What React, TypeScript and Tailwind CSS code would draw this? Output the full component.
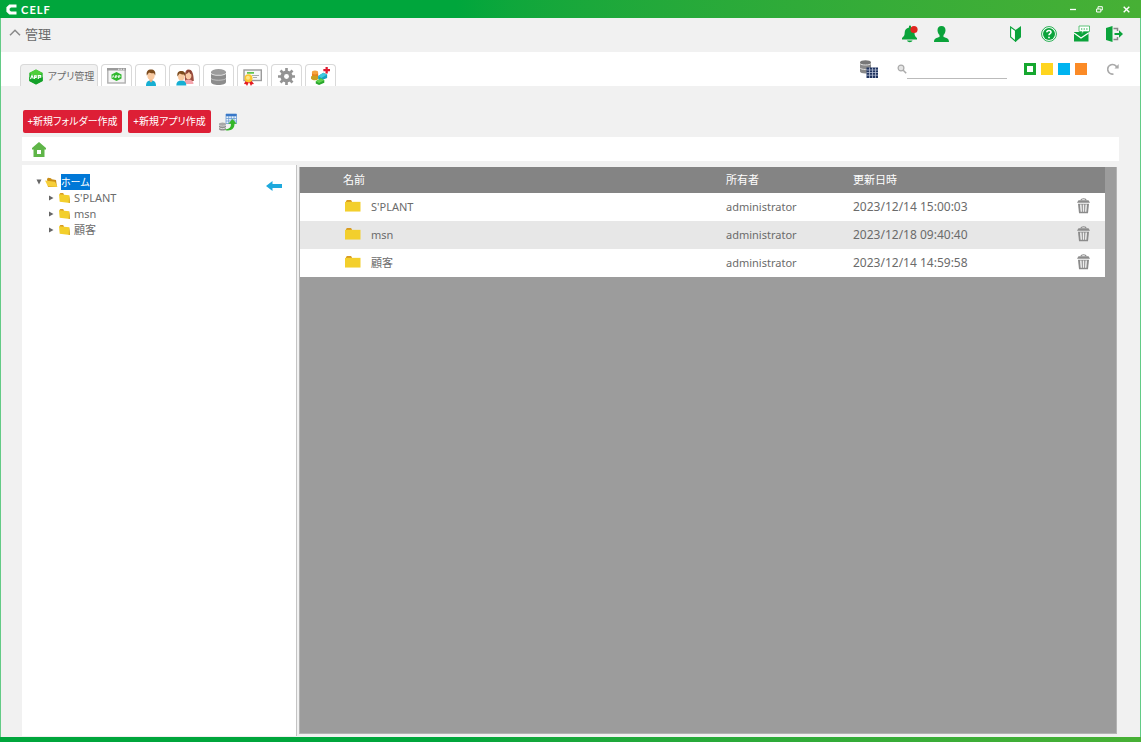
import type { ReactNode } from 'react';

const entries = [
  { name: "S'PLANT", owner: 'administrator', updated: '2023/12/14 15:00:03' },
  { name: 'msn', owner: 'administrator', updated: '2023/12/18 09:40:40' },
  { name: '顧客', owner: 'administrator', updated: '2023/12/14 14:59:58' },
];

const swatches = [
  { label: '緑', className: 'border-[3px] border-[#16a72f] bg-white' },
  { label: '黄', className: 'bg-[#ffd51f]' },
  { label: '青', className: 'bg-[#00b4f0]' },
  { label: '橙', className: 'bg-[#fb8a26]' },
];

function AppHex({ size }: { size: number }) {
  return (
    <svg width={size} height={size} viewBox="0 0 16 16">
      <path d="M8 .5 14.7 4v8L8 15.5 1.3 12V4z" fill="#27b52d" />
      <path d="M8 .5 14.7 4 8 8 1.3 4z" fill="#4fce3a" />
      <path d="M8 15.5 1.3 12V8L8 11l6.700-3v4z" fill="#14a02a" />
      <path d="M2.500 10 4 6.500 5.300 9.600M6.400 10V6.800h1.800v1.600H6.400M10.300 10V6.500h2.400v1.600h-2.400" fill="none" stroke="#fff" strokeWidth="1.100" />
    </svg>
  );
}

function AppWindowIcon() {
  return (
    <svg width="19" height="16" viewBox="0 0 19 16">
      <rect x=".8" y="1" width="17.400" height="14" fill="#f4f4f4" stroke="#b0b0b0" strokeWidth="1.400" />
      <path d="M0 0h19v2.500H0z" fill="#9a9a9a" />
      <path d="M11 .8h1.500v1H11zM13.500.8H15v1h-1.500zM16 .8h1.500v1H16z" fill="#eee" />
      <path d="m9.500 4 5 2.500v4l-5 2.500-5-2.500v-4z" fill="#31b82f" />
      <path d="m5.300 9.700 1-2.200 1 2.200M8.500 10V7.700h1.500V9H8.500M11.500 10V7.700H13V9h-1.500" fill="none" stroke="#fff" strokeWidth=".8" />
    </svg>
  );
}

function UserIcon() {
  return (
    <svg width="12" height="17" viewBox="0 0 12 17">
      <path d="M1 17c0-4 1.500-5.500 5-5.500s5 1.500 5 5.500z" fill="#16afd3" />
      <path d="M4.500 9h3v3L6 13.500 4.500 12z" fill="#eeb083" />
      <ellipse cx="6" cy="6.500" rx="3.700" ry="4.200" fill="#f8c9a0" />
      <path d="M1.800 6.500C1 2.200 3 .5 6 .5s5 1.700 4.200 6L9 4.200C7 4.500 5 4 4 3.500z" fill="#7c4b1d" />
    </svg>
  );
}

function UsersIcon() {
  return (
    <svg width="18" height="17" viewBox="0 0 18 17">
      <path d="M9 12C8.500 5 9 .5 12.700.5S17.500 5 17.800 12z" fill="#9c4f3f" />
      <path d="M7.500 15c0-3 2-4.500 5-4.500s5 1.500 5 4.500z" fill="#f5a5ae" />
      <ellipse cx="12.500" cy="6.500" rx="2.900" ry="3.800" fill="#fbcba6" />
      <path d="M9.500 5c1.500 0 3-1 3.500-2.500.5 1.500 1.300 2.500 2.500 3L15 1.800l-3.500-1z" fill="#8b4334" />
      <path d="M.3 16.500c0-3.500 1.700-5 5-5s5 1.500 5 5z" fill="#16afd3" />
      <ellipse cx="5.300" cy="7.500" rx="3.300" ry="4" fill="#f8c9a0" />
      <path d="M1.500 7.500c-.7-4 1-5.500 3.800-5.500s4.500 1.500 3.800 5.500L8 5.500c-2 0-3.500-.5-4.500-1z" fill="#7c4b1d" />
    </svg>
  );
}

function DatabaseIcon() {
  return (
    <svg width="15" height="16" viewBox="0 0 15 16">
      <path d="M0 3v10c0 1.700 3.300 3 7.500 3s7.500-1.300 7.500-3V3z" fill="#8c8c8c" />
      <ellipse cx="7.500" cy="3" rx="7.500" ry="3" fill="#9c9c9c" />
      <path d="M0 4.200c1.500 2.800 13.500 2.800 15 0" fill="none" stroke="#e0e0e0" strokeWidth="1.100" />
      <path d="M0 9.500c1.500 2.300 13.500 2.300 15 0" fill="none" stroke="#d0d0d0" strokeWidth=".8" />
    </svg>
  );
}

function CertificateIcon() {
  return (
    <svg width="19" height="17" viewBox="0 0 19 17">
      <rect x="1" y="1" width="17.300" height="10.500" fill="#f7f7f7" stroke="#9b9b9b" strokeWidth="1.400" />
      <path d="M4 3h7v1.700H4z" fill="#62c44c" />
      <path d="M9 6h7v1H9zM10 8h4v1h-4z" fill="#aaa" />
      <path d="m3 11-2 4 2 .2L4 17l2-4 2 4 1-1.800 2-.2-3-4z" fill="#e41b23" />
      <circle cx="5.500" cy="9.300" r="4" fill="#fcc62d" />
      <circle cx="5" cy="8.800" r="2" fill="#ffe588" />
    </svg>
  );
}

function GearIcon() {
  return (
    <svg width="17" height="17" viewBox="0 0 18 18">
      <g fill="#949494">
        <path d="M7.600 0h2.800v18H7.600z" />
        <path d="M7.600 0h2.800v18H7.600z" transform="rotate(45 9 9)" />
        <path d="M7.600 0h2.800v18H7.600z" transform="rotate(90 9 9)" />
        <path d="M7.600 0h2.800v18H7.600z" transform="rotate(135 9 9)" />
        <circle cx="9" cy="9" r="6.400" />
      </g>
      <circle cx="9" cy="9" r="2.600" fill="#fff" />
    </svg>
  );
}

function BlocksIcon() {
  return (
    <svg width="19" height="18" viewBox="0 0 20 19">
      <path d="M1 6v6c1.500 1.500 5 1.500 6.500 0V6z" fill="#ee7d18" />
      <ellipse cx="4.200" cy="5.800" rx="3.300" ry="2" fill="#f5a33e" />
      <path d="M0 10c2-1.500 5.500-1.500 7.500.5v2.500c-2 1.500-5.500 1.500-7.500-.5z" fill="#c8a021" />
      <path d="m7.500 9.500 5.500-3.500 4 2v3.500L11 14l-3.500-1.500z" fill="#189fc0" />
      <path d="m7.500 9.500 5.500-3.500 4 2-6 3.500z" fill="#3fc8dd" />
      <path d="m5 15 5.500-3 3.500 2v2.500L8.500 19 5 17.500z" fill="#29a72c" />
      <path d="m5 15 5.500-3 3.500 2-5.500 3z" fill="#5ed04c" />
      <path d="M15.300 0h2.400v2.100H20v2.400h-2.300v2.300h-2.400V4.500H13V2.100h2.300z" fill="#e01b30" />
    </svg>
  );
}

function DatabaseTableIcon() {
  return (
    <svg width="18" height="18" viewBox="0 0 18 18">
      <path d="M0 2.500v9c0 1.200 2.500 2 5.500 2s5.500-.8 5.500-2v-9z" fill="#8a8a8a" />
      <ellipse cx="5.500" cy="2.500" rx="5.500" ry="2.300" fill="#777" />
      <path d="M0 3.500c1 2 10 2 11 0M0 8c1 2 10 2 11 0" fill="none" stroke="#ddd" />
      <path d="M6.500 7.500H18V18H6.500z" fill="#1f335f" />
      <path d="M6.500 10H18M6.500 12.500H18M6.500 15.200H18M9.500 7.500V18M12.500 7.500V18M15.500 7.500V18" stroke="#c3cce0" strokeWidth=".7" />
    </svg>
  );
}

function ImportIcon() {
  return (
    <svg width="18" height="18" viewBox="0 0 18 18">
      <path d="M7 1h10.500v9.500H7z" fill="#e9f3fc" stroke="#6a9bd0" strokeWidth=".8" />
      <path d="M7 1h10.500v2.300H7z" fill="#3978c8" />
      <path d="M7 5.500h10.500M7 8h10.500M9.700 3v7.500M12.300 3v7.500M15 3v7.500" stroke="#6a9bd0" strokeWidth=".8" />
      <path d="M0 11v5c0 2 7 2 7 0v-5z" fill="#8e8e8e" />
      <ellipse cx="3.500" cy="11" rx="3.500" ry="1.500" fill="#a8a8a8" />
      <path d="M0 12c1 1.500 6 1.500 7 0M0 14.500c1 1.500 6 1.500 7 0" fill="none" stroke="#eee" strokeWidth=".8" />
      <path d="M6.500 16.200c3.500.3 5.500-1.500 5.500-5.400H9.300L13.500 6l4.200 4.800h-2.200c0 5.200-3.500 7.400-9 6.400z" fill="#35b72a" />
    </svg>
  );
}

function FolderIcon({ small }: { small?: boolean }) {
  return (
    <svg width={small ? 11 : 16} height={small ? 10 : 12} viewBox="0 0 16 13" preserveAspectRatio="none">
      <path d="M1 2V1l1-1h4l1 1.500V3H1z" fill="#d89b22" />
      <path d={small ? 'M0 1.500 15 3l1 10L1 11.500z' : 'M0 2h15.500v10.500H0z'} fill="#f3cf2c" />
      {small && <path d="m15 3 1 10-2-.3z" fill="#d9aa24" />}
    </svg>
  );
}

function OpenFolderIcon() {
  return (
    <svg width="13" height="11" viewBox="0 0 13 11">
      <path d="M2 2 3 .7l3 .5.7 1L11 3l1 7H3z" fill="#c98e16" />
      <path d="m0 3.500 10 1.200L12.500 10 3 9.500z" fill="#f7cf39" />
    </svg>
  );
}

function TrashIcon() {
  return (
    <svg width="13" height="16" viewBox="0 0 13 17" preserveAspectRatio="none">
      <path d="M4 2.500c0-2.300 5-2.300 5 0" fill="none" stroke="#8b8b8b" strokeWidth="1.200" />
      <path d="M1.500 2.500h10L13 5H0z" fill="#8b8b8b" />
      <path d="M1 6h11l-1 10.300H2z" fill="#8b8b8b" />
      <path d="M3 7h1.600l.4 7.500H3.600zM5.800 7h1.400v7.500H5.800zM8.400 7H10l-.6 7.500H8z" fill="#efefef" />
    </svg>
  );
}

function BellIcon() {
  return (
    <svg width="16" height="18" viewBox="0 0 16 18">
      <path d="M7 1.500C7 .3 9 .3 9 1.500v1c2.500.7 3.500 2.500 3.500 5 0 3 .5 4 2.500 5.500v1.500H0V13c2-1.500 2.700-3 2.700-5.500s1.600-4.500 4.300-5z" fill="#0ba33b" />
      <path d="M5 15.500h5.500c-.7 2.200-4.800 2.200-5.500 0z" fill="#0ba33b" />
      <circle cx="12" cy="4.500" r="3.600" fill="#e0251f" />
    </svg>
  );
}

function PersonIcon() {
  return (
    <svg width="15" height="16" viewBox="0 0 15 16">
      <path d="M7.500 0c2.700 0 4.200 2 4 4.500-.2 2-1 3.500-2 4.500v2c3 .9 5.500 1.500 5.500 5H0c0-3.500 2.500-4.100 5.500-5V9c-1-1-1.800-2.500-2-4.500C3.300 2 4.800 0 7.500 0z" fill="#0ba33b" />
    </svg>
  );
}

function BeginnerIcon() {
  return (
    <svg width="11" height="16" viewBox="0 0 11 16">
      <path d="M.6 1 5.500 4.500v10.700L.6 11z" fill="#fff" stroke="#0ba33b" strokeWidth="1.100" />
      <path d="M11 0v11.300L5.500 16V4z" fill="#0ba33b" />
    </svg>
  );
}

function HelpIcon() {
  return (
    <svg width="16" height="16" viewBox="0 0 16 16">
      <circle cx="8" cy="8" r="7.400" fill="#fff" stroke="#0ba33b" strokeWidth=".9" />
      <circle cx="8" cy="8" r="6" fill="#0ba33b" />
      <path d="M5.800 6.300C6 3.800 10.200 4 10 6.300 9.900 7.800 8 7.700 8 9.300M8 10.700v1.500" fill="none" stroke="#fff" strokeWidth="1.600" />
    </svg>
  );
}

function MailIcon() {
  return (
    <svg width="16" height="17" viewBox="0 0 16 17">
      <path d="M0 7h14.500v9.500H0z" fill="#0ba33b" />
      <path d="m0 8 7 5 7.500-5" fill="none" stroke="#fff" strokeWidth="1.300" />
      <path d="M5 1h10.500v5.500h-6L8 8.500v-2H5z" fill="#fff" stroke="#4dbd6c" strokeWidth=".9" />
      <path d="M7 3.400h1.300v1.200H7zM9.600 3.400h1.300v1.200H9.600zM12.200 3.400h1.300v1.200h-1.300z" fill="#0ba33b" />
    </svg>
  );
}

function LogoutIcon() {
  return (
    <svg width="17" height="16" viewBox="0 0 17 16">
      <path d="M0 2 6.500 0v16L0 14z" fill="#0ba33b" />
      <path d="M7.500 2.500h4V5M11.500 11v2.500h-4" fill="none" stroke="#888" strokeWidth="1.500" />
      <path d="M8.500 7H13V4.300L17 8l-4 3.700V9H8.500z" fill="#0ba33b" />
    </svg>
  );
}

function IconButton({ label, className = '', children }: { label: string; className?: string; children: ReactNode }) {
  return (
    <button type="button" aria-label={label} className={`flex shrink-0 items-center justify-center ${className}`}>
      {children}
    </button>
  );
}

function TitleBar() {
  return (
    <div className="flex h-[18px] shrink-0 items-center bg-linear-to-r from-[#00a63c] from-40% to-[#47b035] pr-0.5 pl-1.5">
      <svg width="11" height="11" viewBox="0 0 11 11" aria-hidden="true">
        <path d="M10.500 2H4L2 4v3l2 2h6.500" fill="none" stroke="#fff" strokeWidth="3.200" />
      </svg>
      <span className="ml-1 font-['Lato',sans-serif] text-[11px] leading-none font-bold tracking-widest text-white">CELF</span>
      <div className="ml-auto flex">
        <IconButton label="最小化" className="h-4 w-[26px]">
          <svg width="7" height="7" viewBox="0 0 7 7"><path d="M0 3.500h6" stroke="#fff" strokeWidth="1.300" /></svg>
        </IconButton>
        <IconButton label="元に戻す" className="h-4 w-[27px]">
          <svg width="7" height="7" viewBox="0 0 7 7"><path d="M2 3V.7h4.300V4H5M.6 3h4.200v3H.6z" fill="none" stroke="#fff" /></svg>
        </IconButton>
        <IconButton label="閉じる" className="h-4 w-[26px]">
          <svg width="7" height="7" viewBox="0 0 7 7"><path d="m.7.700 5.600 5.600M6.300.7.700 6.300" stroke="#fff" strokeWidth="1.400" /></svg>
        </IconButton>
      </div>
    </div>
  );
}

function PageHeader() {
  return (
    <header className="flex h-[34px] shrink-0 items-center bg-[#f1f1f1] pr-[17px] pb-[3px] pl-2">
      <svg width="12" height="7" viewBox="0 0 12 7" className="mb-0.5" aria-hidden="true">
        <path d="m1 6.300 5-5 5 5" fill="none" stroke="#8a8a8a" strokeWidth="1.500" />
      </svg>
      <h1 className="ml-1 text-[13px] leading-4">管理</h1>
      <div className="ml-auto flex items-center">
        <IconButton label="通知"><BellIcon /></IconButton>
        <IconButton label="ユーザー" className="ml-4"><PersonIcon /></IconButton>
        <IconButton label="初心者ガイド" className="ml-[61px]"><BeginnerIcon /></IconButton>
        <IconButton label="ヘルプ" className="ml-5"><HelpIcon /></IconButton>
        <IconButton label="お問い合わせ" className="ml-[17px]"><MailIcon /></IconButton>
        <IconButton label="ログアウト" className="ml-4"><LogoutIcon /></IconButton>
      </div>
    </header>
  );
}

function Tab({ label, children }: { label: string; children: ReactNode }) {
  return (
    <button
      type="button"
      role="tab"
      aria-selected="false"
      aria-label={label}
      className="flex h-[22px] w-[31px] items-end justify-center overflow-hidden rounded-t border border-b-0 border-[#d9d9d9] bg-white"
    >
      {children}
    </button>
  );
}

function TabBar() {
  return (
    <div className="flex h-[34px] shrink-0 items-end bg-white pr-[21px] pl-[19px]">
      <div role="tablist" className="flex items-end gap-[3px]">
        <button
          type="button"
          role="tab"
          aria-selected="true"
          className="flex h-[22px] w-[78px] items-center justify-center gap-1 rounded-t border border-b-0 border-[#d9d9d9] bg-[#f1f1f1] pt-0.5 pl-1 text-[10px] whitespace-nowrap"
        >
          <AppHex size={16} />
          アプリ管理
        </button>
        <Tab label="アプリ画面"><span className="mb-0.5"><AppWindowIcon /></span></Tab>
        <Tab label="ユーザー管理"><UserIcon /></Tab>
        <Tab label="グループ管理"><UsersIcon /></Tab>
        <Tab label="データベース"><span className="mb-px"><DatabaseIcon /></span></Tab>
        <Tab label="ライセンス"><CertificateIcon /></Tab>
        <Tab label="設定"><span className="mb-px"><GearIcon /></span></Tab>
        <Tab label="アドオン"><span className="mb-px"><BlocksIcon /></span></Tab>
      </div>
      <div className="ml-auto flex items-center self-center">
        <IconButton label="テーブル一覧"><DatabaseTableIcon /></IconButton>
        <label className="ml-[19px] flex items-center">
          <svg width="10" height="10" viewBox="0 0 10 10" aria-hidden="true">
            <circle cx="4" cy="4" r="2.900" fill="#e4e4e4" stroke="#aaa" strokeWidth="1.200" />
            <path d="m6.200 6.200 3 3" stroke="#aaa" strokeWidth="1.500" />
          </svg>
          <input
            type="search"
            aria-label="検索"
            className="h-5 w-[100px] border-b border-[#bbb] bg-transparent text-[11px] outline-none"
          />
        </label>
        <div className="ml-[17px] flex gap-[5px]">
          {swatches.map((s) => (
            <button key={s.label} type="button" aria-label={s.label} className={`size-[12px] ${s.className}`} />
          ))}
        </div>
        <IconButton label="更新" className="ml-5">
          <svg width="12" height="12" viewBox="0 0 12 12">
            <path d="M6.500 11A4.800 4.800 0 1 1 10 4.500" fill="none" stroke="#aaa" strokeWidth="1.700" />
            <path d="M11.700 1v4.500H7.500z" fill="#aaa" />
          </svg>
        </IconButton>
      </div>
    </div>
  );
}

function FolderTree() {
  return (
    <nav className="flex w-[275px] shrink-0 items-start border-r border-[#c4c4c4] bg-white pt-[9px] pr-[14px] pl-[14px]">
      <ul className="leading-4">
        <li>
          <div className="flex h-4 items-center">
            <svg width="6" height="6" viewBox="0 0 6 6" aria-hidden="true"><path d="M.5.500h5L3 5.500z" fill="#666" /></svg>
            <span className="ml-[3px]"><OpenFolderIcon /></span>
            <a href="#" className="ml-[3px] bg-[#0078d7] text-[10px] text-white">ホーム</a>
          </div>
          <ul className="pl-[13px]">
            {entries.map((e) => (
              <li key={e.name} className="flex h-4 items-center">
                <svg width="5" height="6" viewBox="0 0 5 6" aria-hidden="true"><path d="M0 .5v5L4.500 3z" fill="#666" /></svg>
                <span className="ml-[5px]"><FolderIcon small /></span>
                <a href="#" className="ml-1">{e.name}</a>
              </li>
            ))}
          </ul>
        </li>
      </ul>
      <IconButton label="ツリーを閉じる" className="mt-[7px] ml-auto">
        <svg width="16" height="10" viewBox="0 0 16 10">
          <path d="M0 5 6.500 0v3H16v4H6.500v3z" fill="#1ea9dd" />
        </svg>
      </IconButton>
    </nav>
  );
}

function FileTable() {
  return (
    <div className="my-0.5 mr-0.5 ml-0.5 min-w-0 grow border border-t-0 border-[#b3b3b3] bg-[#9c9c9c] pr-[11px]">
      <table className="w-full table-fixed border-collapse text-left">
        <thead>
          <tr className="h-[26px] bg-[#848484] text-white">
            <th className="w-[426px] pl-[43px] font-normal">名前</th>
            <th className="w-[127px] font-normal">所有者</th>
            <th className="font-normal">更新日時</th>
            <th className="w-[42px]" aria-label="操作" />
          </tr>
        </thead>
        <tbody>
          {entries.map((e) => (
            <tr key={e.name} className="h-7 bg-white even:bg-[#e7e7e7]">
              <td className="pl-[45px]">
                <a href="#" className="flex items-center gap-2.5">
                  <span className="pb-0.5"><FolderIcon /></span>
                  {e.name}
                </a>
              </td>
              <td>{e.owner}</td>
              <td className="text-xs">{e.updated}</td>
              <td>
                <IconButton label={`${e.name}を削除`} className="ml-[14px] pb-0.5"><TrashIcon /></IconButton>
              </td>
            </tr>
          ))}
        </tbody>
      </table>
    </div>
  );
}

export default function App() {
  return (
    <div className="flex h-screen flex-col bg-[#f1f1f1] font-['Noto_Sans','Noto_Sans_CJK_JP',sans-serif] text-[11px] text-[#6b6b6b] [font-feature-settings:'palt']">
      <TitleBar />
      <div className="flex min-h-0 grow flex-col border-x border-[#63cb86]">
        <PageHeader />
        <TabBar />
        <main className="flex min-h-0 grow flex-col px-[21px]">
          <div className="mt-6 flex shrink-0 items-center">
            <button type="button" className="mr-1.5 ml-px h-[23px] w-[99px] rounded-xs bg-[#dd1f36] text-[10px] whitespace-nowrap text-white">
              +新規フォルダー作成
            </button>
            <button type="button" className="h-[23px] w-[83px] rounded-xs bg-[#dd1f36] text-[10px] whitespace-nowrap text-white">
              +新規アプリ作成
            </button>
            <IconButton label="インポート" className="ml-2"><ImportIcon /></IconButton>
          </div>
          <div className="mt-1 flex h-6 shrink-0 items-center bg-white pl-2.5">
            <a href="#" aria-label="ホーム">
              <svg width="14" height="15" viewBox="0 0 14 15">
                <path d="M7 0 14 6v1.500h-1.500V15h-11V7.500H0V6z" fill="#5fb548" />
                <path d="M5 8h4v4H5z" fill="#fff" />
              </svg>
            </a>
          </div>
          <div className="mt-1 flex min-h-0 grow">
            <FolderTree />
            <FileTable />
          </div>
        </main>
        <div className="h-px shrink-0" />
      </div>
      <footer className="h-[5px] shrink-0 bg-linear-to-r from-[#00a63c] from-40% to-[#47b035]" />
    </div>
  );
}
